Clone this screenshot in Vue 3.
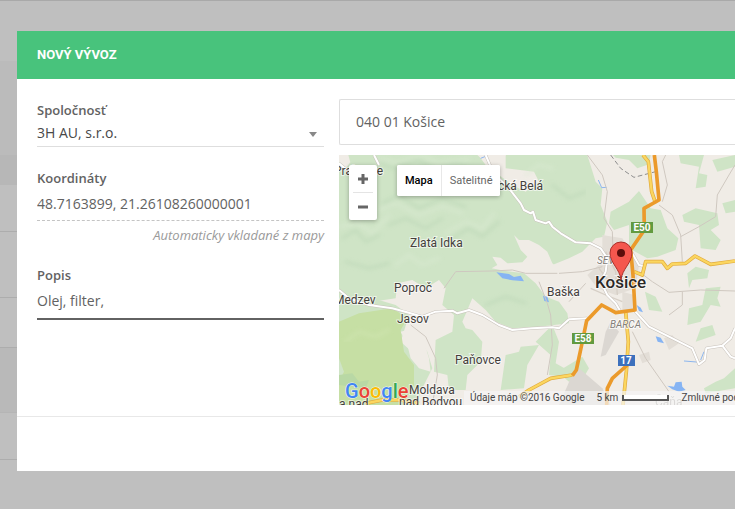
<script setup>
import { ref } from 'vue'

const company = ref('3H AU, s.r.o.')
const coordinates = ref('48.7163899, 21.26108260000001')
const description = ref('Olej, filter,')
const address = ref('040 01 Košice')
const mapType = ref('map')

const rows = ['top', 'plain', 'head', 'first', 'line', 'line', 'shade', 'plain-row', 'line-last']

const towns = [
  { name: 'Prakovce', x: -5, y: 20 },
  { name: 'ická Belá', x: 156, y: 35 },
  { name: 'Zlatá Idka', x: 71, y: 92 },
  { name: 'Poproč', x: 55, y: 137 },
  { name: 'Medzev', x: -5, y: 149 },
  { name: 'Jasov', x: 58, y: 168 },
  { name: 'Baška', x: 208, y: 141 },
  { name: 'Paňovce', x: 116, y: 209 },
  { name: 'Moldava', x: 70, y: 239 },
  { name: 'nad Bodvou', x: 60, y: 251 },
  { name: 'a nad', x: 0, y: 253 },
  { name: 'Čaňa', x: 316, y: 251, faint: true }
]
</script>

<template>
  <div class="page">
    <div class="backdrop" aria-hidden="true">
      <div v-for="(row, i) in rows" :key="i" class="strip" :class="row"></div>
    </div>

    <section class="modal" role="dialog" aria-labelledby="modal-title">
      <header class="modal-header">
        <h1 id="modal-title">NOVÝ VÝVOZ</h1>
      </header>

      <form class="modal-body" @submit.prevent>
        <div class="fields">
          <div class="field">
            <label for="company">Spoločnosť</label>
            <div class="select-wrap">
              <select id="company" v-model="company">
                <option>3H AU, s.r.o.</option>
              </select>
              <svg class="caret" width="8" height="5" viewBox="0 0 8 5"><path d="M0 0h8L4 5z" fill="#888" /></svg>
            </div>
          </div>
          <div class="field">
            <label for="coordinates">Koordináty</label>
            <input id="coordinates" v-model="coordinates" class="dashed" type="text" readonly />
            <p class="hint">Automaticky vkladané z mapy</p>
          </div>
          <div class="field">
            <label for="description">Popis</label>
            <input id="description" v-model="description" class="active" type="text" />
          </div>
        </div>

        <div class="location">
          <input v-model="address" class="address" type="text" aria-label="Adresa" />

          <div class="map">
            <svg class="canvas" width="100%" height="250">
              <defs>
                <filter id="relief" x="0" y="0" width="100%" height="100%">
                  <feGaussianBlur stdDeviation="6" />
                </filter>
              </defs>
              <g transform="scale(.33333)">
                <rect width="3600" height="750" fill="#f0ece6" />
                <!-- forests -->
                <g fill="#cfe4c6">
                  <path d="M28 0H418L440 30 480 60 520 90 560 110 600 80 585 50 500 40 500 0H745L765 45 790 100 785 150 805 200 795 245 770 250 730 290 690 310 640 330 625 365 600 380 620 425 660 440 685 475 690 505 600 515 520 520 470 500 440 465 400 430 370 500 380 520 400 525 430 560 425 620 385 660 380 705 330 705 325 660 285 650 290 555 340 530 345 480 310 450 320 400 300 375 260 400 220 375 175 385 170 430 100 440 0 440V20Z" />
                  <path d="M0 400 170 450 210 480 185 560 240 610 250 690 235 750H0Z" />
                  <path d="M822 0 935 0 930 28 895 40 870 15 830 8Z" />
                  <path d="M815 170 870 140 900 108 935 160 965 165 985 220 1018 250 1010 285 955 305 925 310 870 280 870 210 825 225 810 205Z" />
                  <path d="M1020 0H1095L1080 55 1105 60 1100 95 1070 100 1080 35 1025 25Z" />
                  <path d="M1120 15 1188 0V35L1135 50Z" />
                  <path d="M1030 180 1070 160 1135 175 1140 210 1115 225 1145 255 1130 285 1085 280 1080 210 1035 200Z" />
                  <path d="M1150 145 1188 135V170L1160 175Z" />
                  <path d="M1045 355 1070 335 1110 345 1105 370 1060 375 1050 400Z" />
                  <path d="M1100 400 1145 395 1135 430 1145 455 1115 450 1085 500 1045 510 1050 460 1090 450Z" />
                  <path d="M918 410 950 425 970 470 930 465Z" />
                  <path d="M1085 520 1120 510 1130 540 1070 560Z" />
                  <path d="M545 575 600 570 565 630 555 700 485 705 500 600 540 590Z" />
                  <path d="M590 560 640 510 660 560 650 625 695 650 700 670 630 660 635 600Z" />
                  <path d="M655 650 730 605 750 640 735 665 690 680Z" />
                  <path d="M1095 700 1130 680 1155 670 1188 640V700L1100 715Z" />
                  <path d="M220 530 265 590 280 640 250 700 235 610Z" />
                  <path d="M1500 0H1900L2100 190 1900 350 1600 250Z" />
                </g>
                <path d="M0 500 60 475 160 460 205 490 185 525 195 590 225 630 225 690 190 750H0V680L15 650 0 610Z" fill="#c6dfa4" />
                <path d="M0 660 40 655 60 680 90 675 80 700 0 690Z" fill="#b9d8a5" />
                <!-- relief shading -->
                <g class="relief" filter="url(#relief)" fill="none" stroke-linecap="round">
                  <g stroke="#b8d4b4" stroke-width="8">
                    <path d="M125 25 160 40 235 15 290 45 350 25 400 45" />
                    <path d="M130 145 180 120 240 160 310 130 380 155" />
                    <path d="M10 250 50 225 80 260 120 240" />
                    <path d="M340 250 390 220 430 245 480 200" />
                    <path d="M150 210 200 190 260 220 310 190" />
                    <path d="M20 320 90 340 150 325" />
                    <path d="M640 90 690 130 740 110" />
                    <path d="M440 450 500 425 560 445" />
                  </g>
                  <g stroke="#dcebd4" stroke-width="8">
                    <path d="M125 10 175 25 250 0 300 25 390 12" />
                    <path d="M120 165 170 145 240 180 310 155 370 175" />
                    <path d="M0 215 60 205 100 235 150 180" />
                    <path d="M320 235 380 200 430 220 465 175" />
                    <path d="M170 330 210 300 250 330 300 310" />
                    <path d="M560 60 600 30 640 40" />
                  </g>
                  <path d="M20 560 60 530 110 545 150 525" stroke="#d5e8b8" stroke-width="7" />
                </g>
                <!-- open land -->
                <g fill="#f0ece6">
                  <path d="M0 0H28L34 22 20 40 0 20Z" />
                  <path d="M415 0H500L480 40 455 35Z" />
                  <path d="M745 0H800L820 60 800 110 770 80Z" />
                  <path d="M525 240 540 255 570 255 600 270 625 290 640 325 660 345 640 375 650 420 620 425 590 385 555 355 500 348 458 340 475 330 460 305 485 308 505 325 550 322 565 305 545 285Z" />
                  <path d="M185 530 225 520 255 560 270 610 275 650 240 640 215 610 205 570Z" />
                </g>
                <!-- built-up area -->
                <g fill="#e3ded7">
                  <path d="M790 240 850 250 900 330 890 400 830 420 775 400 745 360 790 320Z" />
                  <path d="M850 410 885 420 885 465 850 465Z" />
                  <path d="M720 640 790 700 815 750 660 750 695 670Z" fill="#dbd7d2" />
                  <path d="M815 500 840 530 800 600 785 605 800 530Z" fill="#dbd7d2" />
                  <path d="M975 550 1000 540 1020 565 990 585Z" />
                  <path d="M900 600 930 590 935 615 910 625Z" />
                </g>
                <!-- water -->
                <g fill="#86b4f3">
                  <path d="M472 352 510 357 525 366 545 362 555 379 520 376 490 370Z" />
                  <path d="M612 422 625 425 630 442 616 438Z" />
                  <path d="M893 450 905 458 912 472 900 468Z" />
                  <path d="M950 544 965 548 975 565 956 560Z" />
                  <path d="M985 692 1005 695 1010 682 1028 680 1030 695 1040 705 1020 710 1000 703Z" />
                </g>
                <path d="M778 75 788 98 803 97M425 10 440 4 447 18M1035 618 1085 622M1095 590 1085 615" fill="none" stroke="#8cb6ee" stroke-width="3" />
                <!-- minor roads -->
                <g fill="none" stroke="#cfc8c0" stroke-width="3" stroke-linejoin="round">
                  <path d="M315 400 350 350 460 348 520 345 560 355 655 355M660 355 730 350 790 335" />
                  <path d="M215 510 260 545 290 610 295 660 280 750" />
                  <path d="M745 0 790 60 805 110 795 190 820 230 822 290" />
                  <path d="M960 150 1000 180 1025 240 1030 320M1025 245 1080 215 1130 185 1135 120 1170 60 1188 30M970 140 985 90 970 20 980 0" />
                  <path d="M900 350 940 380 990 412 1085 405 1188 408M1030 410 1030 450 990 480" />
                  <path d="M600 380 625 445 635 480 640 570 625 660M740 385 690 440M880 530 920 610 990 710" />
                </g>
                <g fill="none" stroke="#d6cfc6" stroke-width="4">
                  <path d="M780 340 810 380 860 400M800 290 830 350 835 420M755 400 800 420 850 440" />
                </g>
                <!-- local roads -->
                <g fill="none" stroke-linejoin="round">
                  <g stroke="#c8c2bb" stroke-width="9">
                    <path d="M440 0 455 35 480 70 510 100 545 145 555 165 575 175 582 170 590 195 620 205 630 200 640 215 665 235 710 262 755 265 785 280 805 310 800 350 785 380 805 420 830 445 845 470" />
                    <path d="M0 405 30 430 90 450 160 460 215 475 250 485 290 470 340 467 355 475 390 465 430 480 480 510 520 525 580 520 640 517 660 520 690 493 745 490" />
                    <path d="M885 465 930 515 990 545 1060 580 1080 628 1097 615 1102 580 1150 572 1175 550 1188 520M1150 572 1175 605 1188 610" />
                    <path d="M877 290 900 330 920 335M0 25 30 50M105 0 120 30" />
                  </g>
                  <g stroke="#ffffff" stroke-width="6">
                    <path d="M440 0 455 35 480 70 510 100 545 145 555 165 575 175 582 170 590 195 620 205 630 200 640 215 665 235 710 262 755 265 785 280 805 310 800 350 785 380 805 420 830 445 845 470" />
                    <path d="M0 405 30 430 90 450 160 460 215 475 250 485 290 470 340 467 355 475 390 465 430 480 480 510 520 525 580 520 640 517 660 520 690 493 745 490" />
                    <path d="M885 465 930 515 990 545 1060 580 1080 628 1097 615 1102 580 1150 572 1175 550 1188 520M1150 572 1175 605 1188 610" />
                    <path d="M877 290 900 330 920 335M0 25 30 50M105 0 120 30" />
                  </g>
                </g>
                <path d="M815 0 845 40 885 67 950 50" fill="none" stroke="#8d8d8d" stroke-width="3" stroke-dasharray="14 8" />
                <!-- main roads -->
                <g fill="none" stroke-linejoin="round">
                  <g stroke="#e0a93c" stroke-width="11">
                    <path d="M912 0 928 20 938 110 950 145M885 350 910 360 920 320 970 320 985 340 1000 327 1040 325 1068 303 1115 328 1188 318M860 470 868 560 862 650 852 750M700 660 635 670 570 705 540 725M80 745 130 735 185 735 240 745" />
                  </g>
                  <g stroke="#fbd65f" stroke-width="7">
                    <path d="M912 0 928 20 938 110 950 145M885 350 910 360 920 320 970 320 985 340 1000 327 1040 325 1068 303 1115 328 1188 318M860 470 868 560 862 650 852 750M700 660 635 670 570 705 540 725M80 745 130 735 185 735 240 745" />
                  </g>
                  <path d="M946 0 952 50 960 135 915 160 916 225 875 285 882 360 888 465 830 473 788 450 743 497 728 570 712 645 700 662M865 630 820 670 805 700 803 750" stroke="#eb9a2b" stroke-width="11" />
                </g>
              </g>

              <!-- road shields -->
              <g class="shields">
                <rect x="292" y="67" width="22" height="11" fill="#629a3f" />
                <text x="303" y="76">E50</text>
                <rect x="233" y="178" width="22" height="11" fill="#629a3f" />
                <text x="244" y="187">E58</text>
                <rect x="279" y="200" width="17" height="11" fill="#3c70bd" />
                <text x="287" y="209">17</text>
              </g>

              <text v-for="town in towns" :key="town.name" class="town" :class="{ faint: town.faint }" :x="town.x" :y="town.y">{{ town.name }}</text>
              <text class="district" x="258" y="109">SEVER</text>
              <text class="district" x="271" y="173">BARCA</text>
              <text class="city" x="256" y="133">Košice</text>

              <path d="M282 125C281 114 271 108 271 98A11 11 0 0 1 293 98C293 108 283 114 282 125Z" fill="#f4574e" stroke="#a92f29" />
              <circle cx="282" cy="98" r="4" fill="#5c0d0b" />

              <text class="logo" x="6" y="243"><tspan fill="#4285f4">G</tspan><tspan fill="#ea4335">o</tspan><tspan fill="#fbbc05">o</tspan><tspan fill="#4285f4">g</tspan><tspan fill="#34a853">l</tspan><tspan fill="#ea4335">e</tspan></text>
            </svg>

            <div class="zoom-control">
              <button type="button" aria-label="Priblížiť">
                <svg width="12" height="12" viewBox="0 0 12 12"><path d="M1 6h10M6 1v10" stroke="#666" stroke-width="3" /></svg>
              </button>
              <button type="button" aria-label="Oddialiť">
                <svg width="12" height="12" viewBox="0 0 12 12"><path d="M1 6h10" stroke="#666" stroke-width="3" /></svg>
              </button>
            </div>

            <div class="type-control">
              <button type="button" :class="{ on: mapType === 'map' }" @click="mapType = 'map'">Mapa</button>
              <button type="button" :class="{ on: mapType === 'satellite' }" @click="mapType = 'satellite'">Satelitné</button>
            </div>

            <div class="attribution">
              <span>Údaje máp ©2016 Google</span>
              <span class="scale">5 km <i></i></span>
              <a href="#">Zmluvné podmienky</a>
            </div>
          </div>
        </div>
      </form>

      <footer class="modal-footer"></footer>
    </section>
  </div>
</template>

<style>
body {
  background: #bfbfbf;
  overflow: hidden;
}
</style>

<style scoped>
* {
  box-sizing: border-box;
}

.page {
  display: grid;
  min-height: 100vh;
  align-items: start;
  font-family: 'Open Sans', sans-serif;
  font-size: 14px;
  color: #626262;
}

.backdrop,
.modal {
  grid-area: 1 / 1;
  min-width: 0;
}

.strip {
  height: 50px;
}

.top {
  height: 61px;
  border-top: 1px solid #a9a9a9;
}

.plain {
  height: 94px;
  background: #bbbbbb;
}

.head {
  height: 30px;
  background: #b7b7b7;
}

.first {
  height: 46px;
}

.line {
  height: 66px;
  border-top: 1px solid #adadad;
}

.line + .line {
  height: 50px;
}

.shade {
  height: 65px;
  background: #b9b9b9;
  border-top: 1px solid #adadad;
}

.plain-row {
  height: 47px;
  border-top: 1px solid #b5b5b5;
}

.line-last {
  border-top: 1px solid #adadad;
}

.modal {
  margin: 31px 0 38px 17px;
  background: #fff;
}

.modal-header {
  display: flex;
  align-items: center;
  height: 48px;
  padding: 0 20px;
  background: #48c37c;
}

h1 {
  margin: 0;
  font-family: Roboto, sans-serif;
  font-size: 13px;
  font-weight: 700;
  line-height: 20px;
  color: #fff;
}

.modal-body {
  display: grid;
  grid-template-columns: 287px minmax(0, 1fr);
  gap: 15px;
  padding: 20px 0 11px 20px;
}

.fields {
  display: flex;
  flex-direction: column;
  gap: 20px;
}

.field {
  display: flex;
  flex-direction: column;
}

label {
  font-size: 13px;
  font-weight: 600;
  line-height: 22px;
}

input,
select {
  width: 100%;
  height: 32px;
  margin: 0;
  padding: 0 0 2px;
  border: 0;
  border-radius: 0;
  outline: 0;
  background: transparent;
  font: inherit;
  color: inherit;
}

.select-wrap {
  display: grid;
  align-items: center;
}

.select-wrap > * {
  grid-area: 1 / 1;
}

select {
  height: 26px;
  appearance: none;
  border-bottom: 1px solid #dedede;
  color: #484848;
}

.caret {
  justify-self: end;
  margin-right: 7px;
  pointer-events: none;
}

.dashed {
  border-bottom: 1px dashed #c4c4c4;
}

.hint {
  margin: 5px 0 0;
  font-size: 13px;
  font-style: italic;
  line-height: 18px;
  text-align: right;
  color: #9a9a9a;
}

.active {
  height: 34px;
  padding-bottom: 4px;
  border-bottom: 2px solid #626262;
}

.location {
  display: flex;
  flex-direction: column;
  gap: 10px;
}

.address {
  height: 46px;
  padding: 0 16px 2px;
  border: 1px solid #dedede;
  border-right: 0;
  border-radius: 2px 0 0 2px;
}

.map {
  position: relative;
  overflow: hidden;
  font-family: Roboto, sans-serif;
}

.canvas {
  display: block;
}

.relief {
  opacity: 0.6;
}

.town {
  font-size: 12px;
  fill: #44403c;
  stroke: rgba(255, 255, 255, 0.6);
  stroke-width: 2px;
  paint-order: stroke;
}

.faint {
  opacity: 0.5;
}

.district {
  font-size: 10px;
  font-style: italic;
  fill: #85807a;
  stroke: rgba(255, 255, 255, 0.7);
  stroke-width: 2px;
  paint-order: stroke;
}

.city {
  font-size: 17px;
  font-weight: 500;
  fill: #2b2826;
  stroke: rgba(255, 255, 255, 0.7);
  stroke-width: 2px;
  paint-order: stroke;
}

.shields {
  font-size: 10px;
  font-weight: 700;
  fill: #fff;
  text-anchor: middle;
}

.logo {
  font-size: 20px;
  font-weight: 500;
  stroke: rgba(255, 255, 255, 0.8);
  stroke-width: 1px;
  paint-order: stroke;
}

button {
  display: flex;
  align-items: center;
  justify-content: center;
  margin: 0;
  padding: 0;
  border: 0;
  background: #fff;
  font: inherit;
  color: #666;
}

.zoom-control,
.type-control {
  position: absolute;
  top: 10px;
  display: flex;
  border-radius: 2px;
  background: #fff;
  box-shadow: 0 1px 4px rgba(0, 0, 0, 0.3);
  overflow: hidden;
}

.zoom-control {
  left: 10px;
  flex-direction: column;
  padding: 0 4px;
}

.zoom-control button {
  width: 20px;
  height: 27px;
}

.zoom-control button + button {
  height: 28px;
  border-top: 1px solid #e4e4e4;
}

.type-control {
  left: 58px;
  font-size: 11px;
}

.type-control button {
  height: 31px;
  padding: 0 8px;
}

.type-control button + button {
  border-left: 1px solid #e8e8e8;
}

.type-control .on {
  font-weight: 500;
  color: #000;
}

.attribution {
  position: absolute;
  right: 0;
  bottom: 0;
  left: 125px;
  display: flex;
  gap: 12px;
  height: 14px;
  padding-left: 6px;
  overflow: hidden;
  background: rgba(245, 245, 245, 0.7);
  font-size: 10px;
  line-height: 14px;
  white-space: nowrap;
  color: #444;
}

.attribution a {
  color: inherit;
  text-decoration: none;
}

.scale {
  display: flex;
  align-items: center;
  gap: 4px;
}

.scale i {
  width: 47px;
  height: 6px;
  border: 2px solid #555;
  border-top: 0;
  background: #fff;
}

.modal-footer {
  height: 55px;
  border-top: 1px solid #e8e8e8;
}
</style>
